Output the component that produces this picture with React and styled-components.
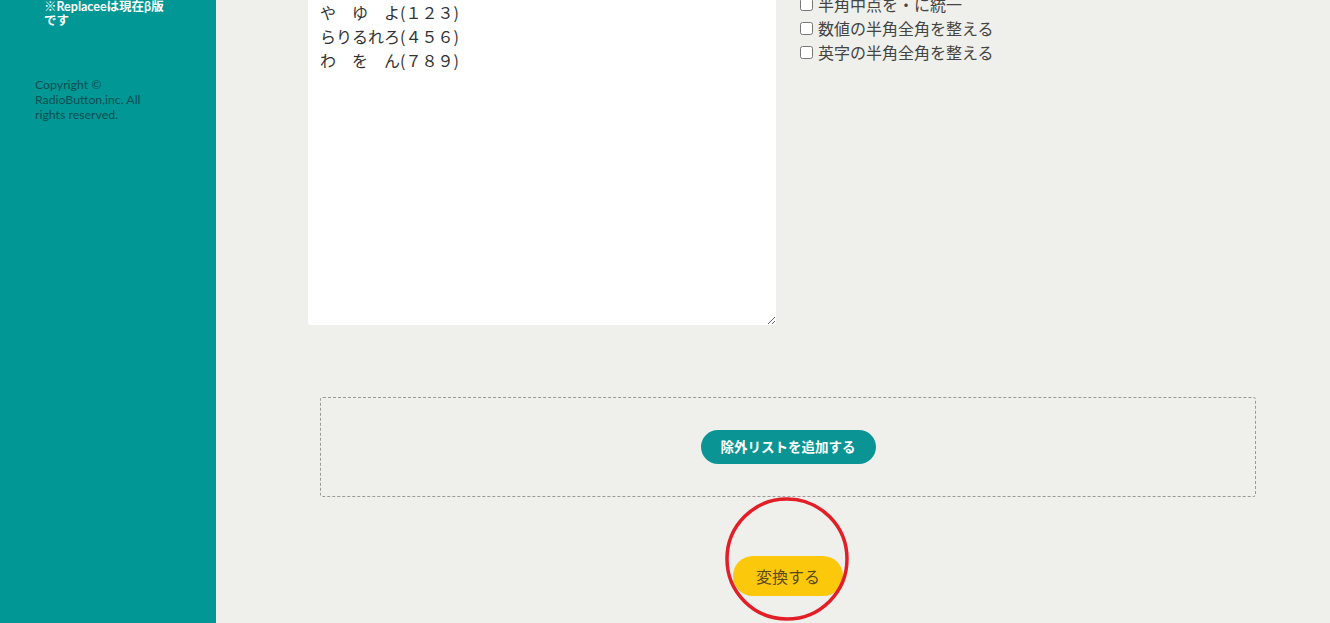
import React from 'react';
import styled, { createGlobalStyle } from 'styled-components';

const Global = createGlobalStyle`
  html, body { margin: 0; padding: 0; overflow: hidden; }
  body {
    background: #efefeb;
    font-family: "Noto Sans CJK JP", "Noto Sans", sans-serif;
  }
`;

const Layout = styled.div`
  display: grid;
  grid-template-columns: 216px 1fr;
  min-height: calc(100vh + 8px);
  margin-top: -8px;
`;

const Sidebar = styled.aside`
  background: #009794;
  padding: 8px 0 0 35px;
  display: flex;
  flex-direction: column;
  gap: 49px;
`;

const Notice = styled.p`
  margin: 0 0 0 9px;
  width: 121px;
  color: #fff;
  font-family: "Lato", "Noto Sans CJK JP", sans-serif;
  font-weight: bold;
  font-size: 12.5px;
  line-height: 14px;
`;

const Copyright = styled.p`
  margin: 0;
  width: 118px;
  color: #0b4f52;
  font-family: "Lato", "Noto Sans", sans-serif;
  font-size: 12.3px;
  line-height: 15px;
`;

const Main = styled.main`
  padding: 0 62px 0 92px;
  display: flex;
  flex-direction: column;
  align-items: stretch;
`;

const Editor = styled.div`
  display: flex;
  gap: 24px;
  align-items: flex-start;
`;

const TextArea = styled.textarea`
  width: 468px;
  height: 333px;
  box-sizing: border-box;
  border: none;
  border-radius: 3px;
  background: #fff;
  padding: 8px 12px;
  font-family: "Noto Sans CJK JP", sans-serif;
  font-size: 16px;
  line-height: 24px;
  color: #333;
  outline: none;
  resize: both;
`;

const Options = styled.div`
  display: flex;
  flex-direction: column;
`;

const Option = styled.label`
  display: flex;
  align-items: center;
  font-size: 16px;
  line-height: 24px;
  color: #444;

  input {
    margin: 0 5px 0 0;
    width: 13px;
    height: 13px;
  }
`;

const ExcludeBox = styled.div`
  margin: 72px 12px 0 12px;
  height: 100px;
  box-sizing: border-box;
  border: 1px dashed #9a9a9a;
  border-radius: 3px;
  display: flex;
  align-items: center;
  justify-content: center;
`;

const Pill = styled.button`
  border: none;
  cursor: pointer;
  font-family: "Noto Sans CJK JP", sans-serif;
  background: ${p => p.$primary ? '#fbc80b' : '#0a9594'};
  color: ${p => p.$primary ? '#5b4a1e' : '#fff'};
  font-weight: ${p => p.$primary ? 'normal' : 'bold'};
  font-size: ${p => p.$primary ? '16px' : '13.5px'};
  height: ${p => p.$primary ? '40px' : '34px'};
  padding: ${p => p.$primary ? '0 23px' : '0 20px'};
  border-radius: 20px;
  line-height: 1;
`;

const ConvertRow = styled.div`
  display: flex;
  justify-content: center;
  margin: 59px 12px 0 12px;
`;

const Marked = styled.div`
  position: relative;
  display: inline-flex;
`;

const Ring = styled.svg`
  position: absolute;
  left: 50%;
  top: 50%;
  width: 130px;
  height: 130px;
  margin: -82px 0 0 -66px;
  pointer-events: none;
`;

const options = ['半角中点を・に統一', '数値の半角全角を整える', '英字の半角全角を整える'];

export default function App() {
  return (
    <>
      <Global />
      <Layout>
        <Sidebar>
          <Notice>※Replaceeは現在β版です</Notice>
          <Copyright>Copyright © RadioButton,inc. All rights reserved.</Copyright>
        </Sidebar>
        <Main>
          <Editor>
            <TextArea
              defaultValue={'や　ゆ　よ(１２３)\nらりるれろ(４５６)\nわ　を　ん(７８９)'}
            />
            <Options>
              {options.map(o => (
                <Option key={o}>
                  <input type="checkbox" />
                  {o}
                </Option>
              ))}
            </Options>
          </Editor>
          <ExcludeBox>
            <Pill>除外リストを追加する</Pill>
          </ExcludeBox>
          <ConvertRow>
            <Marked>
              <Pill $primary>変換する</Pill>
              <Ring viewBox="0 0 130 130">
                <ellipse cx="65" cy="65" rx="60" ry="60" fill="none" stroke="#e21e26" strokeWidth="3.5" />
              </Ring>
            </Marked>
          </ConvertRow>
        </Main>
      </Layout>
    </>
  );
}
